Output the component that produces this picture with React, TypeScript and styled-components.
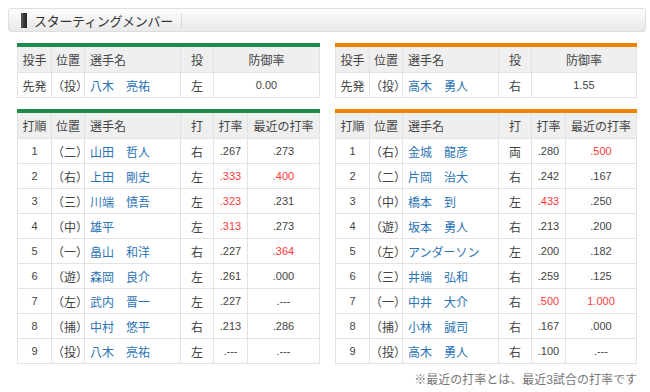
import React from "react";
import styled, { createGlobalStyle } from "styled-components";

/* ---------------- data ---------------- */

type Pitcher = { role: string; pos: string; name: string; hand: string; era: string };
type Batter = {
  order: number;
  pos: string;
  name: string;
  hand: string;
  avg: string;
  avgHot?: boolean;
  recent: string;
  recentHot?: boolean;
};

const GREEN = "#1b8a4b";
const ORANGE = "#f08300";

const homePitcher: Pitcher = { role: "先発", pos: "（投）", name: "八木　亮祐", hand: "左", era: "0.00" };
const awayPitcher: Pitcher = { role: "先発", pos: "（投）", name: "高木　勇人", hand: "右", era: "1.55" };

const homeBatters: Batter[] = [
  { order: 1, pos: "（二）", name: "山田　哲人", hand: "右", avg: ".267", recent: ".273" },
  { order: 2, pos: "（右）", name: "上田　剛史", hand: "左", avg: ".333", avgHot: true, recent: ".400", recentHot: true },
  { order: 3, pos: "（三）", name: "川端　慎吾", hand: "左", avg: ".323", avgHot: true, recent: ".231" },
  { order: 4, pos: "（中）", name: "雄平", hand: "左", avg: ".313", avgHot: true, recent: ".273" },
  { order: 5, pos: "（一）", name: "畠山　和洋", hand: "右", avg: ".227", recent: ".364", recentHot: true },
  { order: 6, pos: "（遊）", name: "森岡　良介", hand: "左", avg: ".261", recent: ".000" },
  { order: 7, pos: "（左）", name: "武内　晋一", hand: "左", avg: ".227", recent: ".---" },
  { order: 8, pos: "（捕）", name: "中村　悠平", hand: "右", avg: ".213", recent: ".286" },
  { order: 9, pos: "（投）", name: "八木　亮祐", hand: "左", avg: ".---", recent: ".---" },
];

const awayBatters: Batter[] = [
  { order: 1, pos: "（右）", name: "金城　龍彦", hand: "両", avg: ".280", recent: ".500", recentHot: true },
  { order: 2, pos: "（二）", name: "片岡　治大", hand: "右", avg: ".242", recent: ".167" },
  { order: 3, pos: "（中）", name: "橋本　到", hand: "左", avg: ".433", avgHot: true, recent: ".250" },
  { order: 4, pos: "（遊）", name: "坂本　勇人", hand: "右", avg: ".213", recent: ".200" },
  { order: 5, pos: "（左）", name: "アンダーソン", hand: "左", avg: ".200", recent: ".182" },
  { order: 6, pos: "（三）", name: "井端　弘和", hand: "右", avg: ".259", recent: ".125" },
  { order: 7, pos: "（一）", name: "中井　大介", hand: "右", avg: ".500", avgHot: true, recent: "1.000", recentHot: true },
  { order: 8, pos: "（捕）", name: "小林　誠司", hand: "右", avg: ".167", recent: ".000" },
  { order: 9, pos: "（投）", name: "高木　勇人", hand: "右", avg: ".100", recent: ".---" },
];

/* ---------------- styles ---------------- */

const GlobalStyle = createGlobalStyle`
  body {
    margin: 0;
    background: #fff;
    font-family: "Liberation Sans", "Noto Sans CJK JP", sans-serif;
    color: #333;
  }
`;

const Page = styled.div`
  width: 638px;
  padding: 8px;
`;

const TitleBar = styled.div`
  height: 22px;
  display: flex;
  align-items: center;
  gap: 7px;
  padding-left: 12px;
  border: 1px solid #dedede;
  border-radius: 3px;
  background: linear-gradient(#fdfdfd, #f3f3f3 50%, #e9e9e9);
`;

const TitleMark = styled.span`
  width: 6px;
  height: 15px;
  background: linear-gradient(90deg, #555, #222);
`;

const TitleText = styled.h2`
  margin: 0;
  font-size: 13px;
  font-weight: normal;
  color: #333;
  letter-spacing: -0.3px;
`;

const TitleDots = styled.span`
  height: 13px;
  margin-left: 1px;
  border-left: 1px dotted #bbb;
`;

const Columns = styled.div`
  display: grid;
  grid-template-columns: 303px 302px;
  column-gap: 15px;
  row-gap: 11px;
  margin: 11px 9px 0;
`;

const Table = styled.table<{ $accent: string }>`
  width: 100%;
  border-collapse: collapse;
  table-layout: fixed;
  border-top: 4px solid ${(p) => p.$accent};
  font-size: 12px;
`;

const HeadCell = styled.th<{ $left?: boolean }>`
  height: 25px;
  padding: 0 ${(p) => (p.$left ? "5px" : "0")};
  border: 1px solid #e2e2e2;
  background: #efefef;
  font-weight: normal;
  color: #444;
  text-align: ${(p) => (p.$left ? "left" : "center")};
  white-space: nowrap;
`;

const Cell = styled.td`
  height: 24px;
  padding: 0;
  border: 1px solid #e2e2e2;
  text-align: center;
  color: #444;
  white-space: nowrap;
`;

const NameCell = styled(Cell)`
  padding-left: 5px;
  text-align: left;
  color: #2a73b5;
`;

const Num = styled(Cell)<{ $hot?: boolean }>`
  font-size: 11px;
  color: ${(p) => (p.$hot ? "#ff3b3b" : "#444")};
`;

const Note = styled.div`
  grid-column: 1 / -1;
  margin-top: -5px;
  text-align: right;
  font-size: 12px;
  color: #777;
`;

/* ---------------- parts ---------------- */

function PitcherTable({ p, accent }: { p: Pitcher; accent: string }) {
  return (
    <Table $accent={accent}>
      <colgroup>
        <col style={{ width: 34 }} />
        <col style={{ width: 33 }} />
        <col style={{ width: 96 }} />
        <col style={{ width: 33 }} />
        <col />
      </colgroup>
      <thead>
        <tr>
          <HeadCell>投手</HeadCell>
          <HeadCell>位置</HeadCell>
          <HeadCell $left>選手名</HeadCell>
          <HeadCell>投</HeadCell>
          <HeadCell>防御率</HeadCell>
        </tr>
      </thead>
      <tbody>
        <tr>
          <Cell>{p.role}</Cell>
          <Cell>{p.pos}</Cell>
          <NameCell>{p.name}</NameCell>
          <Cell>{p.hand}</Cell>
          <Num>{p.era}</Num>
        </tr>
      </tbody>
    </Table>
  );
}

function BatterTable({ rows, accent }: { rows: Batter[]; accent: string }) {
  return (
    <Table $accent={accent}>
      <colgroup>
        <col style={{ width: 34 }} />
        <col style={{ width: 33 }} />
        <col style={{ width: 96 }} />
        <col style={{ width: 33 }} />
        <col style={{ width: 34 }} />
        <col />
      </colgroup>
      <thead>
        <tr>
          <HeadCell>打順</HeadCell>
          <HeadCell>位置</HeadCell>
          <HeadCell $left>選手名</HeadCell>
          <HeadCell>打</HeadCell>
          <HeadCell>打率</HeadCell>
          <HeadCell>最近の打率</HeadCell>
        </tr>
      </thead>
      <tbody>
        {rows.map((b) => (
          <tr key={b.order}>
            <Num>{b.order}</Num>
            <Cell>{b.pos}</Cell>
            <NameCell>{b.name}</NameCell>
            <Cell>{b.hand}</Cell>
            <Num $hot={b.avgHot}>{b.avg}</Num>
            <Num $hot={b.recentHot}>{b.recent}</Num>
          </tr>
        ))}
      </tbody>
    </Table>
  );
}

/* ---------------- page ---------------- */

export default function App() {
  return (
    <Page>
      <GlobalStyle />
      <TitleBar>
        <TitleMark />
        <TitleText>スターティングメンバー</TitleText>
        <TitleDots />
      </TitleBar>
      <Columns>
        <PitcherTable p={homePitcher} accent={GREEN} />
        <PitcherTable p={awayPitcher} accent={ORANGE} />
        <BatterTable rows={homeBatters} accent={GREEN} />
        <BatterTable rows={awayBatters} accent={ORANGE} />
        <Note>※最近の打率とは、最近3試合の打率です</Note>
      </Columns>
    </Page>
  );
}
